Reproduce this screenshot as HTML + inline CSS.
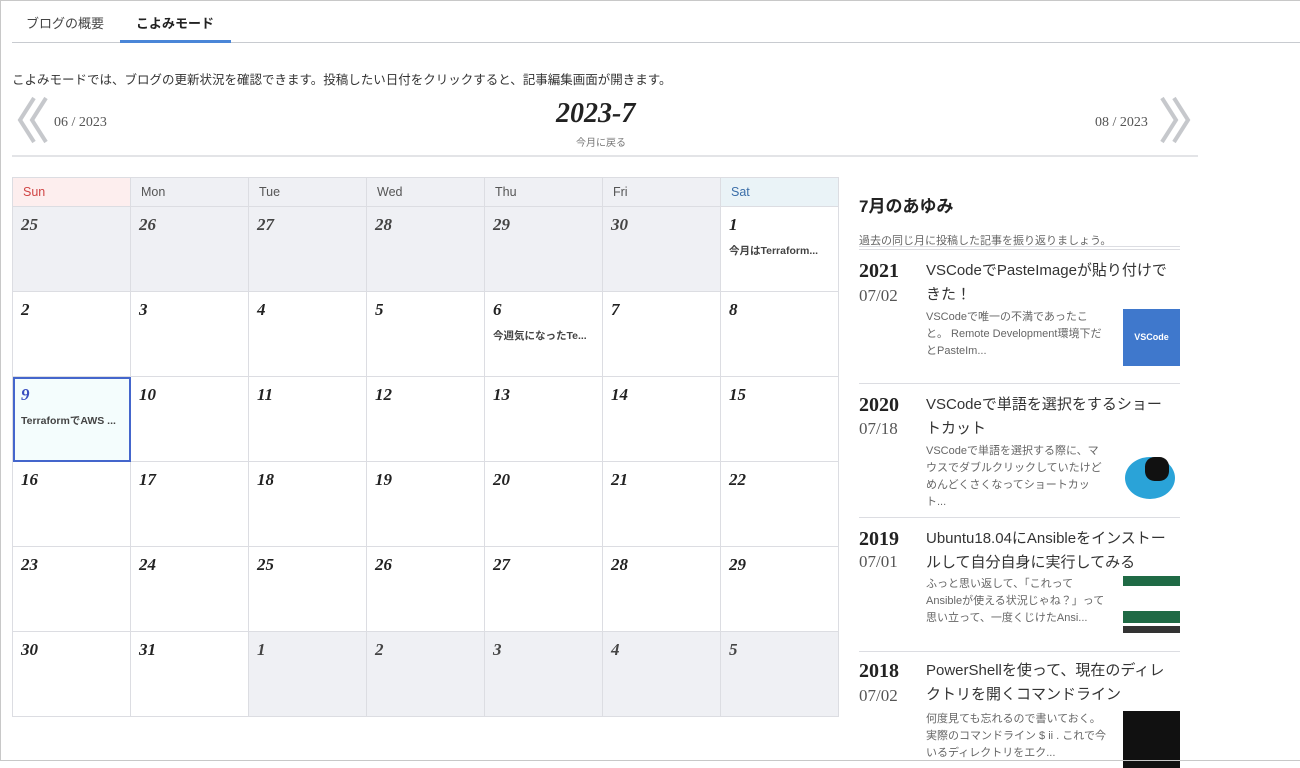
<!DOCTYPE html>
<html><head><meta charset="utf-8"><style>
*{box-sizing:border-box;margin:0;padding:0}
body{width:1300px;height:761px;background:#fff;font-family:"Liberation Sans","Noto Sans CJK JP",sans-serif;color:#333;position:relative;overflow:hidden}
.frame{position:absolute;left:0;top:0;width:1300px;height:761px;border:1px solid #c8c8c8;border-right:none;z-index:5;pointer-events:none}
.a{position:absolute}
.tab{font-size:13px;top:13px}
.num{font-family:"Liberation Serif","Noto Serif CJK SC",serif;font-style:italic;font-weight:bold;font-size:17px;color:#222;position:absolute;left:8px;top:8px}
table{position:absolute;left:12px;top:177px;border-collapse:collapse}
td,th{border:1px solid #dcdde2;width:118px;height:85px;position:relative;vertical-align:top}
th{height:29px;background:#eff0f4;font-weight:normal;font-size:12.5px;color:#555;text-align:left;padding-left:10px;vertical-align:middle}
td.g{background:#eff0f4}
td.g .num{color:#444}
.post{position:absolute;left:8px;top:36px;font-size:10.5px;font-weight:bold;color:#444;white-space:nowrap}
.yr{font-family:"Liberation Serif",serif;font-weight:bold;font-size:20px;color:#222;position:absolute;left:859px}
.md{font-family:"Liberation Serif",serif;font-size:17px;color:#555;position:absolute;left:859px}
.tt{position:absolute;left:926px;width:250px;font-size:15px;line-height:24px;color:#333}
.ex{position:absolute;left:926px;width:180px;font-size:11px;line-height:17px;color:#666}
.th{position:absolute;left:1123px;width:57px;height:57px;overflow:hidden}
.sep{position:absolute;left:859px;width:321px;height:1px;background:#dcdde2}
</style></head><body>
<div class="frame"></div>
<div class="a tab" style="left:26px;color:#444">ブログの概要</div>
<div class="a tab" style="left:136px;color:#222;font-weight:bold">こよみモード</div>
<div class="a" style="left:12px;top:42px;width:1288px;height:1px;background:#c8cbd0"></div>
<div class="a" style="left:120px;top:40px;width:111px;height:3px;background:#4a86d8"></div>
<div class="a" style="left:12px;top:69px;font-size:12.5px;color:#333">こよみモードでは、ブログの更新状況を確認できます。投稿したい日付をクリックすると、記事編集画面が開きます。</div>
<svg class="a" style="left:16px;top:96px" width="36" height="50"><path d="M18 2 L4 24 L18 46 M30 2 L16 24 L30 46" stroke="#c6c8cc" stroke-width="4" fill="none"/></svg>
<div class="a" style="left:54px;top:115px;font-family:'Liberation Serif',serif;font-size:14px;color:#555">06 / 2023</div>
<div class="a" style="left:556px;top:98px;font-family:'Liberation Serif',serif;font-style:italic;font-weight:bold;font-size:28px;color:#222">2023-7</div>
<div class="a" style="left:576px;top:134px;font-size:10px;color:#777">今月に戻る</div>
<div class="a" style="left:1095px;top:115px;font-family:'Liberation Serif',serif;font-size:14px;color:#555">08 / 2023</div>
<svg class="a" style="left:1156px;top:96px" width="36" height="50"><path d="M6 2 L20 24 L6 46 M18 2 L32 24 L18 46" stroke="#c6c8cc" stroke-width="4" fill="none"/></svg>
<div class="a" style="left:12px;top:155px;width:1186px;height:2px;background:#e3e4e7"></div>
<table>
<tr><th style="background:#fdeeee;color:#d04545">Sun</th><th>Mon</th><th>Tue</th><th>Wed</th><th>Thu</th><th>Fri</th><th style="background:#eaf3f7;color:#3b6ea8">Sat</th></tr>
<tr><td class="g"><span class="num">25</span></td><td class="g"><span class="num">26</span></td><td class="g"><span class="num">27</span></td><td class="g"><span class="num">28</span></td><td class="g"><span class="num">29</span></td><td class="g"><span class="num">30</span></td><td><span class="num">1</span><span class="post">今月はTerraform...</span></td></tr>
<tr><td><span class="num">2</span></td><td><span class="num">3</span></td><td><span class="num">4</span></td><td><span class="num">5</span></td><td><span class="num">6</span><span class="post">今週気になったTe...</span></td><td><span class="num">7</span></td><td><span class="num">8</span></td></tr>
<tr><td style="background:#f4fdfd;outline:2px solid #4466cc;outline-offset:-2px"><span class="num" style="color:#3a4fc0">9</span><span class="post">TerraformでAWS ...</span></td><td><span class="num">10</span></td><td><span class="num">11</span></td><td><span class="num">12</span></td><td><span class="num">13</span></td><td><span class="num">14</span></td><td><span class="num">15</span></td></tr>
<tr><td><span class="num">16</span></td><td><span class="num">17</span></td><td><span class="num">18</span></td><td><span class="num">19</span></td><td><span class="num">20</span></td><td><span class="num">21</span></td><td><span class="num">22</span></td></tr>
<tr><td><span class="num">23</span></td><td><span class="num">24</span></td><td><span class="num">25</span></td><td><span class="num">26</span></td><td><span class="num">27</span></td><td><span class="num">28</span></td><td><span class="num">29</span></td></tr>
<tr><td><span class="num">30</span></td><td><span class="num">31</span></td><td class="g"><span class="num">1</span></td><td class="g"><span class="num">2</span></td><td class="g"><span class="num">3</span></td><td class="g"><span class="num">4</span></td><td class="g"><span class="num">5</span></td></tr>
</table>
<div class="a" style="left:859px;top:192px;font-size:17px;font-weight:bold;color:#222">7月のあゆみ</div>
<div class="a" style="left:859px;top:232px;font-size:11px;color:#666">過去の同じ月に投稿した記事を振り返りましょう。</div>
<div class="sep" style="top:246px"></div><div class="sep" style="top:249px"></div>

<div class="yr" style="top:260px">2021</div><div class="md" style="top:286px">07/02</div>
<div class="tt" style="top:259px">VSCodeでPasteImageが貼り付けできた！</div>
<div class="ex" style="top:309px">VSCodeで唯一の不満であったこと。 Remote Development環境下だとPasteIm...</div>
<div class="th" style="top:309px;background:#3f78cc;color:#fff;font-size:9px;font-weight:bold;text-align:center;line-height:57px">VSCode</div>
<div class="sep" style="top:383px"></div>

<div class="yr" style="top:394px">2020</div><div class="md" style="top:419px">07/18</div>
<div class="tt" style="top:393px">VSCodeで単語を選択をするショートカット</div>
<div class="ex" style="top:443px">VSCodeで単語を選択する際に、マウスでダブルクリックしていたけどめんどくさくなってショートカット...</div>
<div class="th" style="top:443px;background:#fff"><div style="position:absolute;left:2px;top:14px;width:50px;height:42px;border-radius:50%;background:#2aa3d8"></div><div style="position:absolute;left:22px;top:14px;width:24px;height:24px;background:#111;border-radius:40%"></div></div>
<div class="sep" style="top:517px"></div>

<div class="yr" style="top:528px">2019</div><div class="md" style="top:552px">07/01</div>
<div class="tt" style="top:527px">Ubuntu18.04にAnsibleをインストールして自分自身に実行してみる</div>
<div class="ex" style="top:576px">ふっと思い返して、「これってAnsibleが使える状況じゃね？」って思い立って、一度くじけたAnsi...</div>
<div class="th" style="top:576px;background:#fff;border-top:10px solid #1f6a45"><div style="position:absolute;left:0;top:25px;width:57px;height:12px;background:#1f6a45"></div><div style="position:absolute;left:0;top:40px;width:57px;height:7px;background:#333"></div></div>
<div class="sep" style="top:651px"></div>

<div class="yr" style="top:660px">2018</div><div class="md" style="top:686px">07/02</div>
<div class="tt" style="top:659px">PowerShellを使って、現在のディレクトリを開くコマンドライン</div>
<div class="ex" style="top:711px">何度見ても忘れるので書いておく。実際のコマンドライン $ ii . これで今いるディレクトリをエク...</div>
<div class="th" style="top:711px;background:#111"></div>
</body></html>
